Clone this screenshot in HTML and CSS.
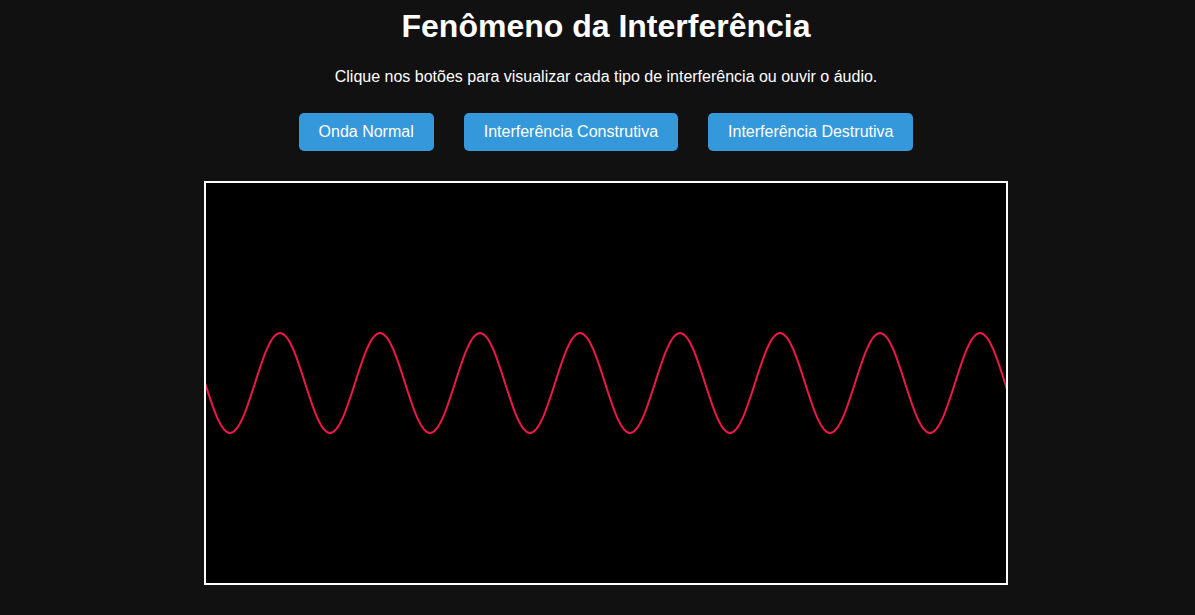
FILE: index.html
```html
<!DOCTYPE html>
<html lang="pt-BR">
<head>
<meta charset="utf-8">
<title>Fenômeno da Interferência</title>
<link rel="stylesheet" href="styles.css">
</head>
<body>
<main class="page">
  <h1 class="title">Fenômeno da Interferência</h1>
  <p class="subtitle">Clique nos botões para visualizar cada tipo de interferência ou ouvir o áudio.</p>
  <div class="controls">
    <button class="btn" type="button">Onda Normal</button>
    <button class="btn" type="button">Interferência Construtiva</button>
    <button class="btn" type="button">Interferência Destrutiva</button>
  </div>
  <div class="stage">
    <svg class="wave" width="800" height="400" viewBox="0 0 800 400" xmlns="http://www.w3.org/2000/svg">
      <path class="wave-line" d="M-51 200 c8.15 -25.61 15.95 -50 25 -50 s16.85 24.39 25 50 s15.95 50 25 50 s16.85 -24.39 25 -50
        s15.95 -50 25 -50 s16.85 24.39 25 50 s15.95 50 25 50 s16.85 -24.39 25 -50
        s15.95 -50 25 -50 s16.85 24.39 25 50 s15.95 50 25 50 s16.85 -24.39 25 -50
        s15.95 -50 25 -50 s16.85 24.39 25 50 s15.95 50 25 50 s16.85 -24.39 25 -50
        s15.95 -50 25 -50 s16.85 24.39 25 50 s15.95 50 25 50 s16.85 -24.39 25 -50
        s15.95 -50 25 -50 s16.85 24.39 25 50 s15.95 50 25 50 s16.85 -24.39 25 -50
        s15.95 -50 25 -50 s16.85 24.39 25 50 s15.95 50 25 50 s16.85 -24.39 25 -50
        s15.95 -50 25 -50 s16.85 24.39 25 50 s15.95 50 25 50 s16.85 -24.39 25 -50
        s15.95 -50 25 -50 s16.85 24.39 25 50 s15.95 50 25 50 s16.85 -24.39 25 -50
        s15.95 -50 25 -50 s16.85 24.39 25 50"/>
    </svg>
  </div>
</main>
</body>
</html>
```

FILE: styles.css
```css
html, body {
  margin: 0;
  padding: 0;
  background: #111111;
}

body {
  font-family: "Liberation Sans", Arial, sans-serif;
  color: #ffffff;
}

.page {
  display: flex;
  flex-direction: column;
  align-items: center;
  padding: 8px 0 0 17px;
}

.title {
  margin: 0 0 23px;
  font-size: 32px;
  font-weight: bold;
  line-height: normal;
}

.subtitle {
  margin: 0;
  font-size: 16px;
  line-height: normal;
}

.controls {
  display: flex;
  gap: 30px;
  margin-top: 27px;
}

.btn {
  font-family: "Liberation Sans", Arial, sans-serif;
  font-size: 16px;
  line-height: normal;
  color: #ffffff;
  background: #3498db;
  border: none;
  border-radius: 5px;
  padding: 10px 20px;
  cursor: pointer;
}

.stage {
  margin-top: 30px;
  border: 2px solid #ffffff;
  background: #000000;
  width: 800px;
  height: 400px;
}

.wave {
  display: block;
}

.wave-line {
  fill: none;
  stroke: #ee1848;
  stroke-width: 2;
}
```
